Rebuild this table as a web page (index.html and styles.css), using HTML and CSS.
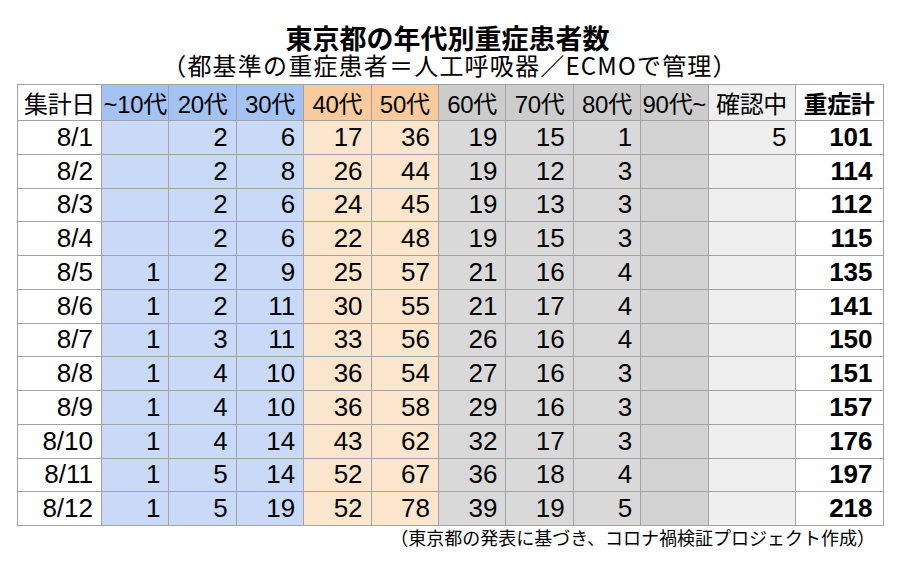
FILE: index.html
```html
<!DOCTYPE html>
<html lang="ja">
<head>
<meta charset="utf-8">
<title>東京都の年代別重症患者数</title>
<link rel="stylesheet" href="styles.css">
</head>
<body>
<div class="page">
  <h1 class="title">東京都の年代別重症患者数</h1>
  <p class="subtitle">（都基準の重症患者＝人工呼吸器／ECMOで管理）</p>
  <table class="grid">
    <colgroup>
      <col class="c-date"><col class="c-n"><col class="c-n"><col class="c-n"><col class="c-n"><col class="c-n"><col class="c-n"><col class="c-n"><col class="c-n"><col class="c-n"><col class="c-chk"><col class="c-tot">
    </colgroup>
    <thead>
      <tr>
        <th class="h-date">集計日</th>
        <th class="h-blue">~10代</th>
        <th class="h-blue">20代</th>
        <th class="h-blue">30代</th>
        <th class="h-orange">40代</th>
        <th class="h-orange">50代</th>
        <th class="h-gray">60代</th>
        <th class="h-gray">70代</th>
        <th class="h-gray">80代</th>
        <th class="h-gray">90代~</th>
        <th class="h-chk">確認中</th>
        <th class="h-tot">重症計</th>
      </tr>
    </thead>
    <tbody>
      <tr><td class="d">8/1</td><td class="b"></td><td class="b">2</td><td class="b">6</td><td class="o">17</td><td class="o">36</td><td class="g">19</td><td class="g">15</td><td class="g">1</td><td class="g9"></td><td class="k">5</td><td class="t">101</td></tr>
      <tr><td class="d">8/2</td><td class="b"></td><td class="b">2</td><td class="b">8</td><td class="o">26</td><td class="o">44</td><td class="g">19</td><td class="g">12</td><td class="g">3</td><td class="g9"></td><td class="k"></td><td class="t">114</td></tr>
      <tr><td class="d">8/3</td><td class="b"></td><td class="b">2</td><td class="b">6</td><td class="o">24</td><td class="o">45</td><td class="g">19</td><td class="g">13</td><td class="g">3</td><td class="g9"></td><td class="k"></td><td class="t">112</td></tr>
      <tr><td class="d">8/4</td><td class="b"></td><td class="b">2</td><td class="b">6</td><td class="o">22</td><td class="o">48</td><td class="g">19</td><td class="g">15</td><td class="g">3</td><td class="g9"></td><td class="k"></td><td class="t">115</td></tr>
      <tr><td class="d">8/5</td><td class="b">1</td><td class="b">2</td><td class="b">9</td><td class="o">25</td><td class="o">57</td><td class="g">21</td><td class="g">16</td><td class="g">4</td><td class="g9"></td><td class="k"></td><td class="t">135</td></tr>
      <tr><td class="d">8/6</td><td class="b">1</td><td class="b">2</td><td class="b">11</td><td class="o">30</td><td class="o">55</td><td class="g">21</td><td class="g">17</td><td class="g">4</td><td class="g9"></td><td class="k"></td><td class="t">141</td></tr>
      <tr><td class="d">8/7</td><td class="b">1</td><td class="b">3</td><td class="b">11</td><td class="o">33</td><td class="o">56</td><td class="g">26</td><td class="g">16</td><td class="g">4</td><td class="g9"></td><td class="k"></td><td class="t">150</td></tr>
      <tr><td class="d">8/8</td><td class="b">1</td><td class="b">4</td><td class="b">10</td><td class="o">36</td><td class="o">54</td><td class="g">27</td><td class="g">16</td><td class="g">3</td><td class="g9"></td><td class="k"></td><td class="t">151</td></tr>
      <tr><td class="d">8/9</td><td class="b">1</td><td class="b">4</td><td class="b">10</td><td class="o">36</td><td class="o">58</td><td class="g">29</td><td class="g">16</td><td class="g">3</td><td class="g9"></td><td class="k"></td><td class="t">157</td></tr>
      <tr><td class="d">8/10</td><td class="b">1</td><td class="b">4</td><td class="b">14</td><td class="o">43</td><td class="o">62</td><td class="g">32</td><td class="g">17</td><td class="g">3</td><td class="g9"></td><td class="k"></td><td class="t">176</td></tr>
      <tr><td class="d">8/11</td><td class="b">1</td><td class="b">5</td><td class="b">14</td><td class="o">52</td><td class="o">67</td><td class="g">36</td><td class="g">18</td><td class="g">4</td><td class="g9"></td><td class="k"></td><td class="t">197</td></tr>
      <tr><td class="d">8/12</td><td class="b">1</td><td class="b">5</td><td class="b">19</td><td class="o">52</td><td class="o">78</td><td class="g">39</td><td class="g">19</td><td class="g">5</td><td class="g9"></td><td class="k"></td><td class="t">218</td></tr>
    </tbody>
  </table>
  <p class="note">（東京都の発表に基づき、コロナ禍検証プロジェクト作成）</p>
</div>
</body>
</html>
```

FILE: styles.css
```css
html, body {
  margin: 0;
  padding: 0;
  background: #ffffff;
}

.page {
  width: 900px;
  height: 572px;
  padding-top: 23px;
  box-sizing: border-box;
  font-family: "Liberation Sans", "Noto Sans CJK JP", sans-serif;
  color: #000;
}

.title {
  margin: 0;
  text-align: center;
  font-family: "Noto Sans CJK JP", sans-serif;
  font-weight: 700;
  font-size: 27px;
  line-height: 30px;
  padding-right: 5px;
}

.subtitle {
  margin: -2px 0 0 0;
  text-align: center;
  font-family: "Noto Sans CJK JP", sans-serif;
  font-size: 24px;
  line-height: 28px;
  letter-spacing: 1.2px;
}

.grid {
  margin: 5px 0 0 17px;
  width: 865px;
  table-layout: fixed;
  border-collapse: collapse;
  font-size: 26px;
}

.c-date { width: 84px; }
.c-n { width: 67.4px; }
.c-chk { width: 87px; }
.c-tot { width: 88px; }

.grid th,
.grid td {
  border: 1px solid #a3a3a3;
  padding: 0 8px 0 0;
  white-space: nowrap;
  overflow: hidden;
}

.grid thead tr { height: 35.5px; }
.grid tbody tr { height: 33.75px; }

.grid th {
  font-weight: 400;
  font-size: 24px;
  text-align: center;
  padding: 0;
  letter-spacing: -0.3px;
}

.grid td { text-align: right; }

.h-date { background: #ffffff; }
.h-blue { background: #a4c2f4; }
.h-orange { background: #f9cb9c; }
.h-gray { background: #cccccc; }
.h-chk { background: #efefef; }
.h-tot { background: #ffffff; font-weight: 700 !important; }

.d { background: #ffffff; }
.b { background: #c9daf8; }
.o { background: #fce5cd; }
.g { background: #d9d9d9; }
.g9 { background: #d3d3d3; }
.k { background: #efefef; }
.t { background: #ffffff; font-weight: 700; padding-right: 10px !important; }

.note {
  margin: 0 25px 0 0;
  text-align: right;
  font-family: "Noto Sans CJK JP", sans-serif;
  font-size: 18px;
  line-height: 22px;
}
```
